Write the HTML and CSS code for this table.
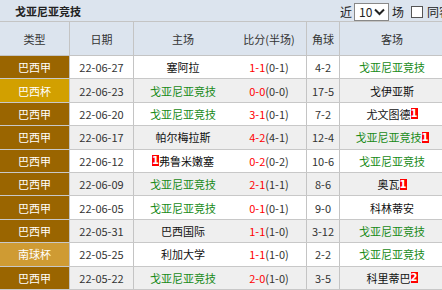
FILE: index.html
```html
<!DOCTYPE html>
<html lang="zh">
<head>
<meta charset="utf-8">
<link rel="stylesheet" href="styles.css">
</head>
<body>
<div class="page">
  <div class="topbar">
    <div class="title">戈亚尼亚竞技</div>
    <div class="filters">
      <span class="lbl">近</span>
      <span class="selectbox"><span class="sel-val">10</span><svg class="chev" width="11" height="8" viewBox="0 0 11 8"><path d="M1 1.5 L5.5 6 L10 1.5" fill="none" stroke="#222" stroke-width="2"/></svg></span>
      <span class="lbl">场</span>
      <span class="checkbox"></span>
      <span class="lbl">同客场</span>
    </div>
  </div>
  <div class="table">
    <div class="row head">
      <div class="c type b">类型</div>
      <div class="c date b">日期</div>
      <div class="c home">主场</div>
      <div class="c score b">比分(半场)</div>
      <div class="c corner b">角球</div>
      <div class="c away">客场</div>
    </div>

    <div class="row">
      <div class="c type b jia">巴西甲</div>
      <div class="c date b">22-06-27</div>
      <div class="c home">塞阿拉</div>
      <div class="c score b"><em>1-1</em>(0-1)</div>
      <div class="c corner b">4-2</div>
      <div class="c away green">戈亚尼亚竞技</div>
    </div>
    <div class="row alt">
      <div class="c type b bei">巴西杯</div>
      <div class="c date b">22-06-23</div>
      <div class="c home green">戈亚尼亚竞技</div>
      <div class="c score b"><em>0-0</em>(0-0)</div>
      <div class="c corner b">17-5</div>
      <div class="c away">戈伊亚斯</div>
    </div>
    <div class="row">
      <div class="c type b jia">巴西甲</div>
      <div class="c date b">22-06-20</div>
      <div class="c home green">戈亚尼亚竞技</div>
      <div class="c score b"><em>3-1</em>(0-1)</div>
      <div class="c corner b">7-2</div>
      <div class="c away">尤文图德<i class="card">1</i></div>
    </div>
    <div class="row alt">
      <div class="c type b jia">巴西甲</div>
      <div class="c date b">22-06-17</div>
      <div class="c home">帕尔梅拉斯</div>
      <div class="c score b"><em>4-2</em>(4-1)</div>
      <div class="c corner b">12-4</div>
      <div class="c away green">戈亚尼亚竞技<i class="card">1</i></div>
    </div>
    <div class="row">
      <div class="c type b jia">巴西甲</div>
      <div class="c date b">22-06-12</div>
      <div class="c home"><i class="card">1</i>弗鲁米嫩塞</div>
      <div class="c score b"><em>0-2</em>(0-2)</div>
      <div class="c corner b">10-6</div>
      <div class="c away green">戈亚尼亚竞技</div>
    </div>
    <div class="row alt">
      <div class="c type b jia">巴西甲</div>
      <div class="c date b">22-06-09</div>
      <div class="c home green">戈亚尼亚竞技</div>
      <div class="c score b"><em>2-1</em>(1-1)</div>
      <div class="c corner b">8-6</div>
      <div class="c away">奥瓦<i class="card">1</i></div>
    </div>
    <div class="row">
      <div class="c type b jia">巴西甲</div>
      <div class="c date b">22-06-05</div>
      <div class="c home green">戈亚尼亚竞技</div>
      <div class="c score b"><em>0-1</em>(0-1)</div>
      <div class="c corner b">9-0</div>
      <div class="c away">科林蒂安</div>
    </div>
    <div class="row alt">
      <div class="c type b jia">巴西甲</div>
      <div class="c date b">22-05-31</div>
      <div class="c home">巴西国际</div>
      <div class="c score b"><em>1-1</em>(1-0)</div>
      <div class="c corner b">3-12</div>
      <div class="c away green">戈亚尼亚竞技</div>
    </div>
    <div class="row">
      <div class="c type b nan">南球杯</div>
      <div class="c date b">22-05-25</div>
      <div class="c home">利加大学</div>
      <div class="c score b"><em>1-1</em>(1-0)</div>
      <div class="c corner b">2-2</div>
      <div class="c away green">戈亚尼亚竞技</div>
    </div>
    <div class="row alt">
      <div class="c type b jia">巴西甲</div>
      <div class="c date b">22-05-22</div>
      <div class="c home green">戈亚尼亚竞技</div>
      <div class="c score b"><em>2-0</em>(1-0)</div>
      <div class="c corner b">3-5</div>
      <div class="c away">科里蒂巴<i class="card">2</i></div>
    </div>
  </div>
</div>
</body>
</html>
```

FILE: styles.css
```css
html, body {
  margin: 0;
  padding: 0;
  overflow: hidden;
  background: #fff;
}
.page {
  width: 444px;
  font-family: "Noto Sans CJK SC", "Noto Sans", sans-serif;
  font-size: 11px;
  color: #333;
}
.topbar {
  height: 21px;
  background: #dce4ee;
  border-bottom: 1px solid #c4c4c4;
  display: flex;
  align-items: center;
  overflow: hidden;
}
.title {
  width: 325px;
  flex: none;
  padding-left: 15px;
  box-sizing: border-box;
  font-weight: bold;
  color: #222;
}
.filters {
  display: flex;
  align-items: center;
  font-size: 12px;
  color: #222;
  white-space: nowrap;
  padding-top: 3px;
  padding-left: 15px;
}
.lbl {
  line-height: 14px;
}
.selectbox {
  display: flex;
  align-items: center;
  justify-content: space-between;
  width: 35px;
  height: 18px;
  padding: 0 3px 0 4px;
  margin: 0 3px 0 2px;
  box-sizing: border-box;
  background: #fff;
  border: 1px solid #888;
}
.sel-val {
  font-size: 12px;
  line-height: 14px;
}
.chev {
  flex: none;
}
.checkbox {
  width: 12px;
  height: 12px;
  border: 1px solid #555;
  background: #fff;
  margin: 0 4px 0 7px;
  box-sizing: border-box;
  flex: none;
}
.row {
  display: grid;
  grid-template-columns: 70px 64px 98px 75px 33px 104px;
  height: 23.4px;
  border-bottom: 1px solid #c8c8c8;
  box-sizing: border-box;
  background: #fff;
}
.row.alt {
  background: #efefef;
}
.row.head {
  height: 34px;
  background: #dce4ee;
  border-bottom: 1px solid #c4c4c4;
  color: #333;
}
.c {
  display: flex;
  align-items: center;
  justify-content: center;
  white-space: nowrap;
}
.c.b {
  border-right: 1px solid #c4c4c4;
}
.type {
  color: #fff;
}
.head .type {
  color: #333;
}
.jia { background: #9a6500; }
.bei { background: #d2a000; }
.nan { background: #cf9b33; }
.home, .away {
  color: #111;
}
.home.green, .away.green {
  color: #178a17;
}
.head .home, .head .away {
  color: #333;
}
em {
  font-style: normal;
  color: #f00;
}
.card {
  font-style: normal;
  display: inline-block;
  background: #f00;
  color: #fff;
  font-weight: bold;
  font-size: 10px;
  line-height: 11px;
  height: 11px;
  width: 7px;
  text-align: center;
  font-family: "DejaVu Sans", sans-serif;
}
```
